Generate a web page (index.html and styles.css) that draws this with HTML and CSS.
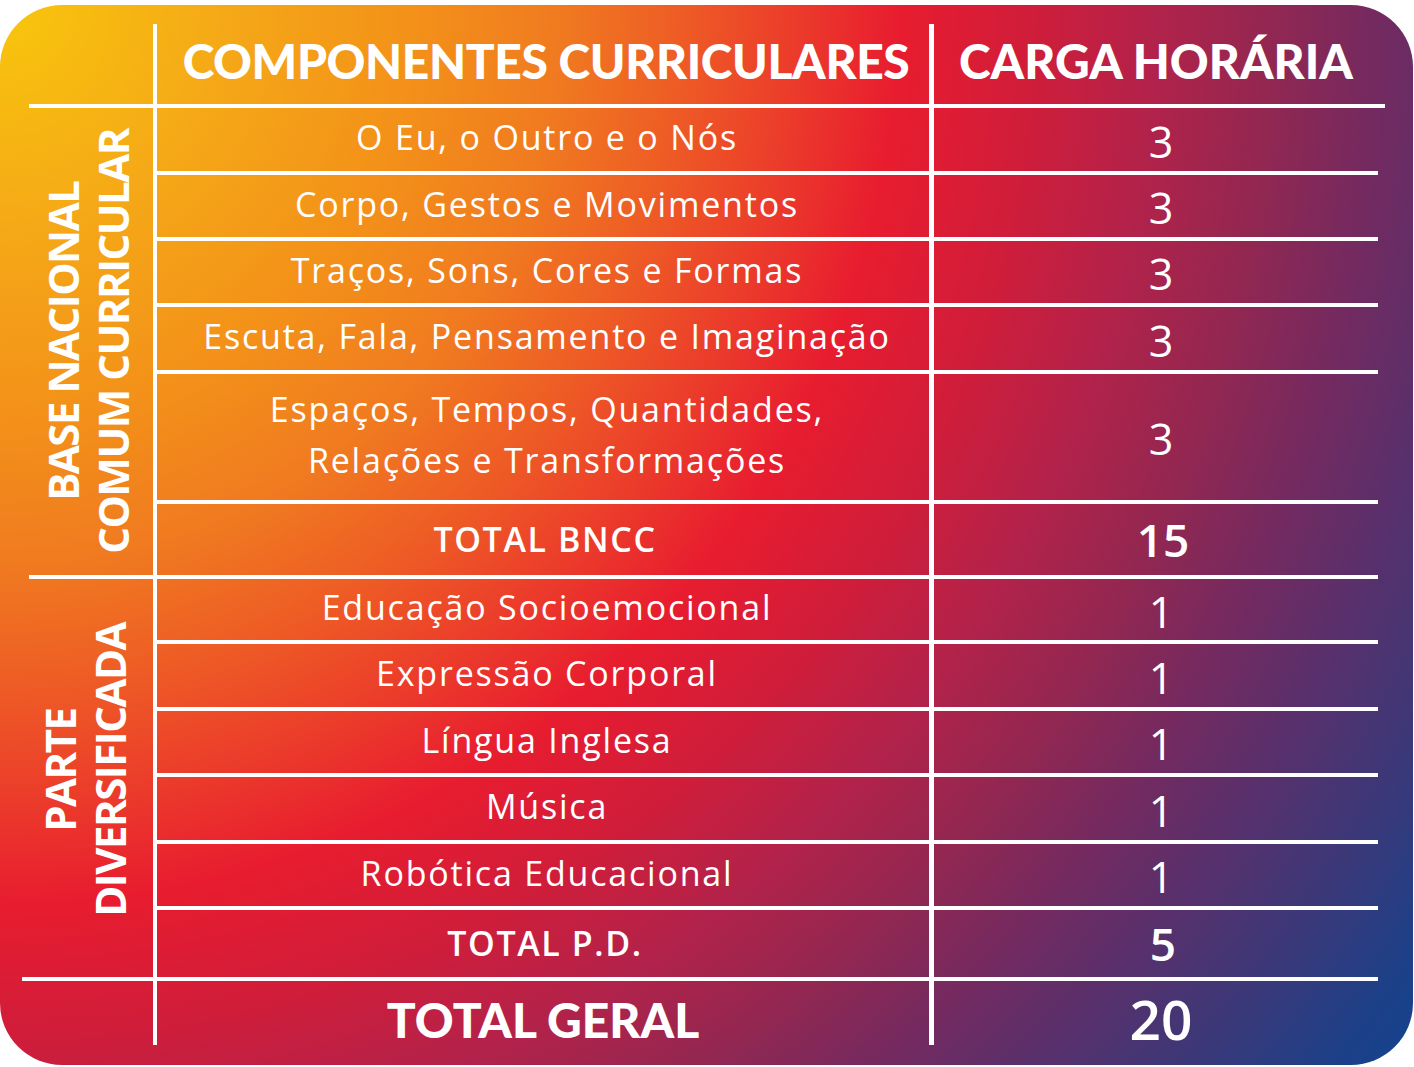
FILE: index.html
```html
<!DOCTYPE html>
<html lang="pt-BR">
<head>
<meta charset="utf-8">
<title>Componentes Curriculares</title>
<link rel="stylesheet" href="styles.css">
</head>
<body>
<div class="card">
  <div class="grid">
    <div class="side side-head"></div>
    <div class="cell comp head">COMPONENTES CURRICULARES</div>
    <div class="cell ch head head-ch">CARGA HORÁRIA</div>

    <div class="side side-bncc"><span class="vlabel">BASE NACIONAL<br>COMUM CURRICULAR</span></div>
    <div class="cell comp">O Eu, o Outro e o Nós</div><div class="cell ch">3</div>
    <div class="cell comp">Corpo, Gestos e Movimentos</div><div class="cell ch">3</div>
    <div class="cell comp">Traços, Sons, Cores e Formas</div><div class="cell ch">3</div>
    <div class="cell comp">Escuta, Fala, Pensamento e Imaginação</div><div class="cell ch">3</div>
    <div class="cell comp two">Espaços, Tempos, Quantidades,<br>Relações e Transformações</div><div class="cell ch">3</div>
    <div class="cell comp total">TOTAL BNCC</div><div class="cell ch total-num">15</div>

    <div class="side side-pd"><span class="vlabel">PARTE<br>DIVERSIFICADA</span></div>
    <div class="cell comp">Educação Socioemocional</div><div class="cell ch">1</div>
    <div class="cell comp">Expressão Corporal</div><div class="cell ch">1</div>
    <div class="cell comp">Língua Inglesa</div><div class="cell ch">1</div>
    <div class="cell comp">Música</div><div class="cell ch">1</div>
    <div class="cell comp">Robótica Educacional</div><div class="cell ch">1</div>
    <div class="cell comp total">TOTAL P.D.</div><div class="cell ch total-num">5</div>

    <div class="side side-tg"></div>
    <div class="cell comp grand">TOTAL GERAL</div><div class="cell ch grand-num">20</div>
  </div>
</div>
</body>
</html>
```
FILE: styles.css
```css
* { box-sizing: border-box; }
html, body { margin: 0; padding: 0; background: #ffffff; }
body { width: 1414px; height: 1067px; overflow: hidden; font-family: "Open Sans", "Noto Sans", sans-serif; color: #fff; }

.card {
  margin-top: 5px;
  width: 1413px;
  height: 1060px;
  border-radius: 62px;
  padding: 19px 0 0 22px;
  background: radial-gradient(circle farthest-corner at 0 0,
    #f8c60c 0px, #f5a917 220px, #f39019 420px, #f07a20 560px, #ee5c25 680px,
    #eb3a2b 800px, #e81c2f 900px, #d01d3a 1030px, #b3224a 1150px, #922751 1270px,
    #732a60 1380px, #58306c 1480px, #3c3878 1590px, #1d4088 1700px, #10448f 1780px);
}

.grid {
  display: grid;
  grid-template-columns: 131px 776px 449px;
  grid-template-rows: 84px 67px 66px 66px 67px 130px 75px 65px 67px 66px 67px 66px 71px 64px;
}

.cell {
  display: flex;
  align-items: center;
  justify-content: center;
  text-align: center;
  white-space: nowrap;
  border-bottom: 4px solid #fff;
  font-size: 34px;
  font-weight: 400;
  line-height: 51px;
  letter-spacing: 1.8px;
  padding: 0 0 4px 8px;
}
.comp { border-left: 4px solid #fff; }
.ch {
  border-left: 5px solid #fff;
  font-size: 43px;
  padding: 3px 0 0 10px;
  letter-spacing: 0;
}

.head {
  font-family: "Lato", "Open Sans", sans-serif;
  font-weight: 900;
  font-size: 48px;
  letter-spacing: 0;
  padding: 0 0 8px 0;
}
.comp.head { letter-spacing: -0.4px; padding-left: 6px; }
.head-ch { margin-right: -7px; padding: 0 7px 8px 0; }

.total { font-weight: 600; font-size: 34px; letter-spacing: 1.6px; padding: 0 0 0 4px; }
.total-num { font-weight: 600; font-size: 46px; padding: 0 0 0 14px; }
.grand {
  border-bottom: 0;
  font-family: "Lato", "Open Sans", sans-serif;
  font-weight: 900; font-size: 48px; letter-spacing: 0;
  padding: 12px 0 0 0;
}
.grand-num { border-bottom: 0; font-weight: 600; font-size: 55px; padding: 10px 0 0 10px; }

.side {
  display: flex;
  align-items: center;
  justify-content: center;
}
.side-head { margin-left: 7px; border-bottom: 4px solid #fff; }
.side-bncc { grid-row: 2 / span 6; margin-left: 7px; border-bottom: 4px solid #fff; padding-right: 6px; }
.side-pd { grid-row: 8 / span 6; border-bottom: 4px solid #fff; padding: 0 6px 16px 0; }
.side-tg { grid-row: 14; }

.vlabel {
  writing-mode: vertical-rl;
  transform: rotate(180deg);
  font-weight: 700;
  font-size: 42px;
  line-height: 50px;
  letter-spacing: -1.5px;
  text-align: center;
  white-space: nowrap;
}
```
